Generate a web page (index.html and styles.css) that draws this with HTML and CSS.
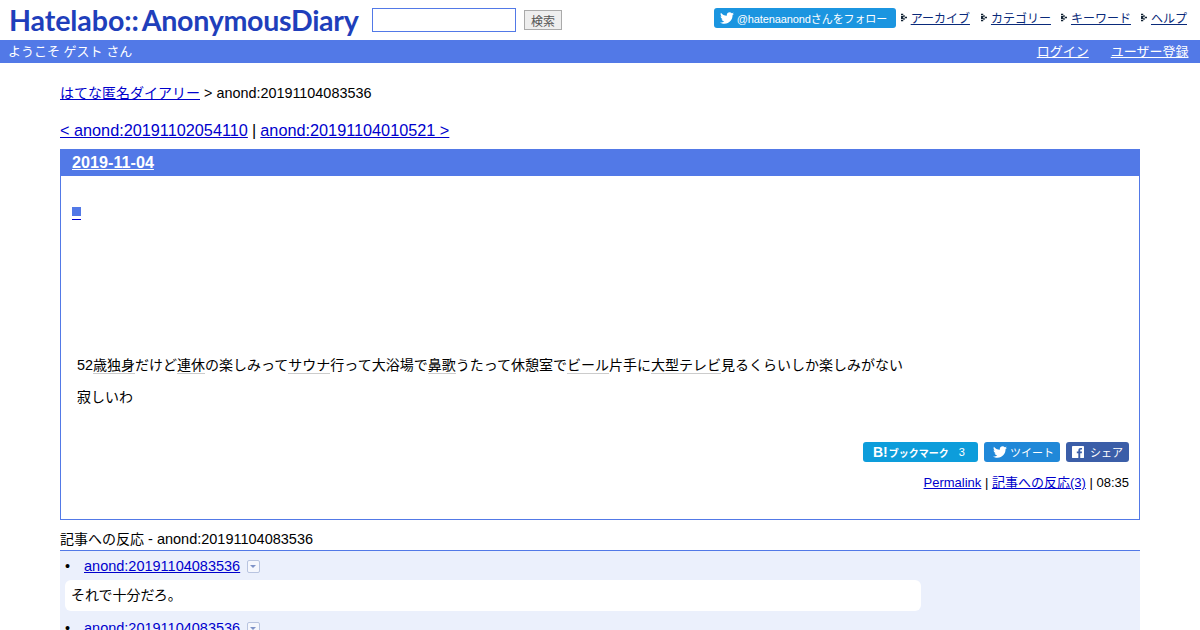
FILE: index.html
```html
<!DOCTYPE html>
<html lang="ja">
<head>
<meta charset="utf-8">
<title>anond:20191104083536</title>
<link rel="stylesheet" href="styles.css">
</head>
<body>
<header class="top">
  <div class="top-left">
    <a class="logo">Hatelabo::<span class="logo-rest">AnonymousDiary</span></a>
    <input class="search-box" type="text">
    <button class="search-btn">検索</button>
  </div>
  <nav class="top-right">
    <a class="follow">
      <svg class="tw" viewBox="0 0 24 24"><path d="M23.9 4.6c-.9.4-1.8.7-2.8.8 1-.6 1.8-1.6 2.2-2.7-1 .6-2 1-3.1 1.2C19.2 2.9 17.9 2.3 16.500 2.300c-2.700 0-4.900 2.200-4.900 4.900 0 .4 0 .8.100 1.100C7.600 8.100 4 6.100 1.600 3.100 1.200 3.800 1 4.700 1 5.600c0 1.700.9 3.200 2.200 4.100-.8 0-1.600-.2-2.200-.6v.1c0 2.400 1.700 4.400 3.900 4.800-.4.100-.8.200-1.300.2-.3 0-.6 0-.9-.1.6 2 2.400 3.400 4.600 3.400-1.700 1.300-3.800 2.100-6.100 2.100-.4 0-.8 0-1.200-.1C2.200 20.900 4.800 21.700 7.500 21.700c9.100 0 14-7.500 14-14v-.6c1-.7 1.800-1.600 2.400-2.500z"/></svg>
      @hatenaanondさんをフォロー
    </a>
    <a class="menu-link"><svg class="arrow" viewBox="0 0 8 10"><path d="M0 0h3v2H0zM3 2h2v2H3zM5 4h3v2H5zM3 6h2v2H3zM0 8h3v2H0zM0 3h3v4H0z"/></svg><span>アーカイブ</span></a>
    <a class="menu-link"><svg class="arrow" viewBox="0 0 8 10"><path d="M0 0h3v2H0zM3 2h2v2H3zM5 4h3v2H5zM3 6h2v2H3zM0 8h3v2H0zM0 3h3v4H0z"/></svg><span>カテゴリー</span></a>
    <a class="menu-link"><svg class="arrow" viewBox="0 0 8 10"><path d="M0 0h3v2H0zM3 2h2v2H3zM5 4h3v2H5zM3 6h2v2H3zM0 8h3v2H0zM0 3h3v4H0z"/></svg><span>キーワード</span></a>
    <a class="menu-link"><svg class="arrow" viewBox="0 0 8 10"><path d="M0 0h3v2H0zM3 2h2v2H3zM5 4h3v2H5zM3 6h2v2H3zM0 8h3v2H0zM0 3h3v4H0z"/></svg><span>ヘルプ</span></a>
  </nav>
</header>
<div class="bar">
  <span>ようこそ ゲスト さん</span>
  <div class="bar-links"><a>ログイン</a><a>ユーザー登録</a></div>
</div>
<main class="main">
  <p class="crumb"><a href="#"><span class="ja">はてな匿名ダイアリー</span></a> &gt; anond:20191104083536</p>
  <p class="pager"><a href="#">&lt; anond:20191102054110</a> <span class="sep">|</span> <a href="#">anond:20191104010521 &gt;</a></p>
  <section class="entry">
    <h2 class="date"><a>2019-11-04</a></h2>
    <div class="entry-body">
      <a class="square"><i></i></a>
      <div class="text">
        <p>52<span class="ja"><span class="kw">歳</span><span class="kw">独身</span>だけど<span class="kw">連休</span>の楽しみって<span class="kw">サウナ</span>行って大浴場で<span class="kw">鼻歌</span>うたって休憩室で<span class="kw">ビール</span>片手に<span class="kw">大型</span><span class="kw">テレビ</span>見るくらいしか楽しみがない</span></p>
        <p><span class="ja">寂しいわ</span></p>
      </div>
      <div class="share">
        <a class="sbtn hb"><b>B!</b><span class="hb-t">ブックマーク</span><span class="hb-n">3</span></a>
        <a class="sbtn twb"><svg class="tw" viewBox="0 0 24 24"><path d="M23.9 4.6c-.9.4-1.8.7-2.8.8 1-.6 1.8-1.6 2.200-2.700-1 .6-2 1-3.100 1.200C19.200 2.900 17.900 2.300 16.500 2.300c-2.700 0-4.900 2.200-4.900 4.900 0 .4 0 .8.100 1.100C7.600 8.100 4 6.100 1.600 3.100 1.200 3.800 1 4.700 1 5.600c0 1.700.9 3.200 2.200 4.100-.8 0-1.600-.2-2.200-.6v.1c0 2.400 1.700 4.400 3.900 4.800-.4.100-.8.200-1.300.2-.3 0-.6 0-.9-.1.6 2 2.400 3.400 4.600 3.400-1.700 1.300-3.800 2.100-6.100 2.100-.4 0-.8 0-1.200-.1C2.200 20.900 4.800 21.700 7.500 21.700c9.100 0 14-7.500 14-14v-.6c1-.7 1.800-1.600 2.400-2.500z"/></svg>ツイート</a>
        <a class="sbtn fb"><svg class="fbi" viewBox="0 0 14 14"><path fill-rule="evenodd" d="M1 0h12a1 1 0 0 1 1 1v12a1 1 0 0 1-1 1H9.600V8.600h1.800l.3-2.100H9.600V5.200c0-.6.200-1 1-1h1.100V2.300c-.2 0-.9-.1-1.600-.1-1.600 0-2.700 1-2.700 2.800v1.500H5.600v2.100h1.800V14H1a1 1 0 0 1-1-1V1a1 1 0 0 1 1-1z"/></svg>シェア</a>
      </div>
      <p class="foot"><a href="#">Permalink</a> | <a href="#"><span class="ja13">記事への反応</span>(3)</a> | 08:35</p>
    </div>
  </section>
  <h3 class="refs-title"><span class="ja">記事への反応</span> - anond:20191104083536</h3>
  <ul class="refs">
    <li>
      <div class="ref-head"><a href="#">anond:20191104083536</a><span class="drop"><i></i></span></div>
      <div class="ref-body">それで十分だろ。</div>
    </li>
    <li>
      <div class="ref-head"><a href="#">anond:20191104083536</a><span class="drop"><i></i></span></div>
    </li>
  </ul>
</main>
</body>
</html>
```
FILE: styles.css
```css
html, body { margin: 0; height: 630px; overflow: hidden; }
body {
  background: #fff;
  color: #000;
  font-family: "Liberation Sans", "Noto Sans CJK JP", sans-serif;
  font-size: 14.4px;
}
a { color: #00c; text-decoration: underline; }
p { margin: 0; }

.top { height: 40px; display: flex; justify-content: space-between; padding: 0 13px 0 9px; box-sizing: border-box; }
.top-left { display: flex; align-items: center; }
.logo {
  width: 349px;
  font-family: Lato, sans-serif;
  font-weight: 700;
  font-size: 28.6px;
  letter-spacing: -0.1px;
  color: #1f3fbb;
  text-decoration: none;
  white-space: nowrap;
}
.logo-rest { margin-left: 3px; letter-spacing: -0.3px; }
.search-box {
  width: 144px; height: 24px; box-sizing: border-box;
  margin: 0 0 0 14px; padding: 0;
  border: 1px solid #5279e7; background: #fff;
}
.search-btn {
  width: 38px; height: 20px; box-sizing: border-box;
  margin: 0 0 0 8px; padding: 0;
  border: 1px solid #aaa; background: #eee; color: #555;
  font: 12px "Noto Sans CJK JP", sans-serif;
}
.top-right { display: flex; align-items: flex-start; padding-top: 8px; font-size: 12px; }
.follow {
  width: 182px; height: 20px; box-sizing: border-box;
  display: flex; align-items: center; padding-left: 6px;
  background: #1b95e0; color: #fff; border-radius: 3px;
  font-size: 11px; letter-spacing: -0.1px; text-decoration: none; white-space: nowrap;
}
.tw { width: 14px; height: 14px; fill: #fff; margin-right: 3px; flex: none; }
.menu-link { display: flex; align-items: center; height: 19px; margin-left: 5px; color: #123; text-decoration: none; }
.menu-link + .menu-link { margin-left: 10px; }
.menu-link:nth-of-type(2) { margin-right: 1px; }
.menu-link span { text-decoration: underline; color: #0a2a7a; }
.arrow { width: 6px; height: 9px; margin-right: 4px; fill: #123; }

.bar {
  height: 23px; box-sizing: border-box;
  display: flex; justify-content: space-between; align-items: center;
  padding: 0 11.5px 2px 8px;
  background: #5279e7; color: #fff; font-size: 13px;
}
.bar-links { display: flex; gap: 22px; }
.bar-links a { color: #fff; }

.main { margin: 0 60px; }
.crumb { padding-top: 21px; line-height: 18px; }
.ja { font-size: 14px; }
.ja13 { font-size: 13px; }
.pager { margin-top: 19px; padding-bottom: 1px; font-size: 16.25px; line-height: 18px; }
.sep { margin: 0 -0.4px; }
.entry { margin-top: 9px; border: 1px solid #5279e7; height: 371px; box-sizing: border-box; }
.date { margin: -1px -1px 0; height: 27px; padding-left: 12px; background: #5279e7; font-size: 16.2px; line-height: 27px; }
.date a { color: #fff; }
.entry-body { padding: 0 10px; }
.square { display: inline-block; margin: 30px 0 0 1px; padding-bottom: 1px; border-bottom: 1px solid #00c; height: 12px; vertical-align: top; }
.square i { display: block; width: 9px; height: 9px; margin-top: 1px; background: #5279e7; }
.text { margin: 135px 0 0 6px; }
.text p { line-height: 20px; margin-bottom: 12px; }
.kw { border-bottom: 1px solid #ccc; }
.share { display: flex; justify-content: flex-end; gap: 6px; margin-top: 35px; }
.sbtn {
  height: 20px; display: flex; align-items: center; box-sizing: border-box;
  border-radius: 3px; color: #fff; text-decoration: none; font-size: 11px; white-space: nowrap;
}
.hb { width: 115px; background: #0d9ddb; padding-left: 10px; }
.hb b { font-size: 14px; margin-right: 1px; }
.hb-t { font-weight: 700; font-size: 10px; }
.hb-n { margin-left: 10px; }
.twb { width: 76px; background: #2088d8; padding-left: 9px; }
.twb .tw { margin-right: 3px; }
.fb { width: 63px; background: #3b5ea8; padding-left: 6px; }
.fbi { width: 12px; height: 12px; fill: #fff; margin-right: 6px; flex: none; }
.foot { margin-top: 12px; text-align: right; font-size: 13px; line-height: 17px; }
.refs-title { margin: 10px 0 0; font-size: 14.5px; font-weight: 400; line-height: 19px; padding-bottom: 1px; border-bottom: 1px solid #5279e7; }
.refs { margin: 0; padding: 6px 5px 0; background: #ebf0fc; list-style: none; height: 200px; }
.refs li { position: relative; margin-bottom: 8px; }
.refs li::before { content: "•"; position: absolute; left: 0; top: 0; line-height: 18px; }
.ref-head { padding-left: 19px; display: flex; align-items: center; height: 18px; font-size: 14.5px; }
.drop { display: inline-block; width: 13px; height: 13px; box-sizing: border-box; margin-left: 7px; border: 1px solid #b8c4e0; background: #f5f7fd; border-radius: 2px; position: relative; }
.drop i { position: absolute; left: 2px; top: 4px; border: 3.5px solid transparent; border-top-color: #7f93c8; border-bottom: 0; }
.ref-body { margin-top: 5px; width: 850px; height: 31px; padding-left: 6px; background: #fff; border-radius: 6px; font-size: 14px; line-height: 30px; }
```
